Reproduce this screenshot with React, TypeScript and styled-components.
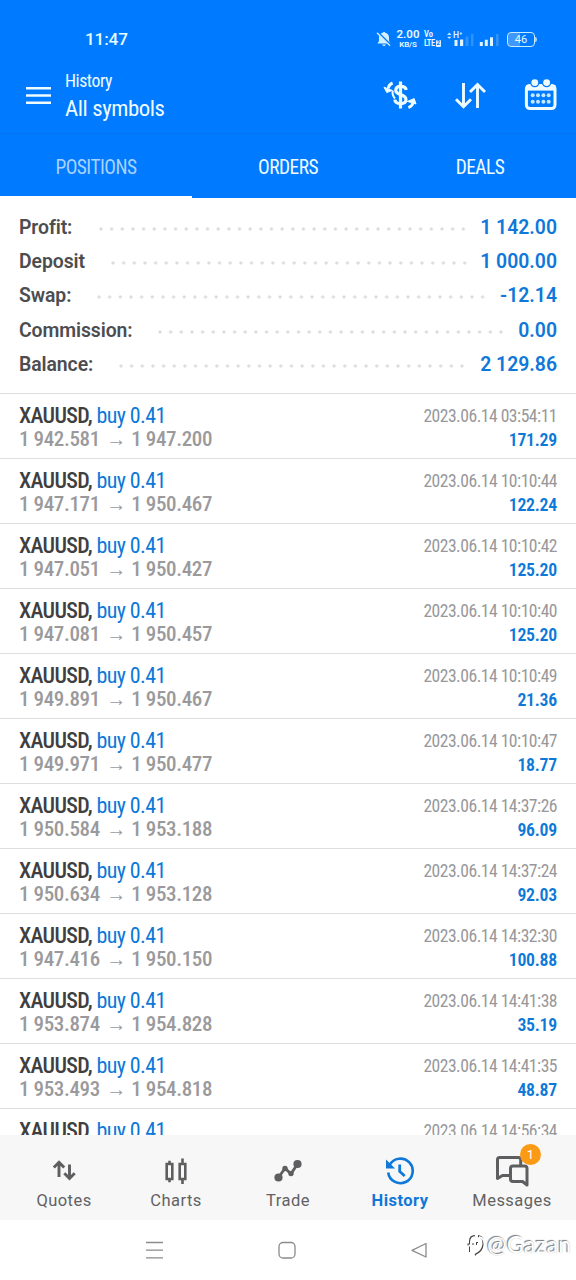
import React from 'react';
import styled, { createGlobalStyle, css } from 'styled-components';

const GlobalStyle = createGlobalStyle`
    body {
        margin: 0;
        background: #ffffff;
        font-family: Roboto, "Liberation Sans", sans-serif;
    }
`;

const condensed = css`
    font-stretch: 75%;
    white-space: nowrap;
`;

const Screen = styled.div`
    width: 576px;
    height: 1280px;
    display: flex;
    flex-direction: column;
    overflow: hidden;
    background: #ffffff;
`;

const StatusBar = styled.div`
    flex: none;
    box-sizing: border-box;
    height: 60px;
    padding: 18px 39px 0 85px;
    display: flex;
    justify-content: space-between;
    align-items: center;
    background: #007aff;
    color: #e6fbff;
`;

const Clock = styled.div`
    font-size: 17.2px;
    font-weight: 500;
    letter-spacing: -0.15px;
`;

const StatusIcons = styled.div`
    display: flex;
    align-items: center;
`;

const NetSpeed = styled.div`
    width: 24px;
    margin-left: 4px;
    text-align: center;
    font-size: 8px;
    line-height: 9px;
    font-weight: 600;
    letter-spacing: -0.1px;
    white-space: nowrap;

    b {
        display: block;
        font-size: 11.5px;
        line-height: 11px;
        font-weight: 600;
        letter-spacing: 0;
    }
`;

const Volte = styled.div`
    width: 17px;
    margin: 0 5px 0 4px;
    font-size: 8.5px;
    line-height: 9px;
    font-weight: 600;
    font-stretch: 75%;
    letter-spacing: -0.4px;

    span {
        display: block;
        letter-spacing: 0;
    }
`;

const VolteRow = styled.div`
    display: flex;
    align-items: center;
`;

const SimMark = styled.i`
    width: 6px;
    height: 7px;
    margin-left: 1px;
    border-radius: 1px;
    background: #dff4ff;
    color: #007aff;
    font-size: 7px;
    line-height: 7px;
    letter-spacing: 0;
    font-style: normal;
    text-align: center;
`;

const Battery = styled.div`
    box-sizing: border-box;
    width: 28px;
    height: 15px;
    margin-left: 8px;
    border: 1px solid #c8ecff;
    border-radius: 4px;
    display: flex;
    align-items: center;
    justify-content: center;
    font-size: 11px;
    background: linear-gradient(90deg, #3f98fb 46%, transparent 46%);
`;

const BatteryTip = styled.div`
    width: 2px;
    height: 5px;
    border-radius: 0 2px 2px 0;
    background: #9fd4ff;
`;

const Header = styled.header`
    flex: none;
    box-sizing: border-box;
    height: 74px;
    padding: 0 18px 0 26px;
    display: flex;
    background: #007aff;
    border-bottom: 1px solid #0674f0;
`;

const Titles = styled.div`
    ${condensed}
    flex: 1;
    margin-left: 14px;
    padding-top: 10px;
    color: #effcff;
`;

const Caption = styled.div`
    font-size: 17.8px;
    line-height: 21px;
    letter-spacing: -0.45px;
`;

const Title = styled.div`
    font-size: 22.8px;
    line-height: 26px;
    letter-spacing: -0.42px;
    margin-top: 5px;
`;

const MenuIcon = styled.svg`
    margin-top: 27px;
`;

const Actions = styled.div`
    display: flex;
    gap: 36px;
    padding-top: 17px;
`;

const Tabs = styled.nav`
    flex: none;
    height: 64px;
    display: flex;
    background: #007aff;
`;

const Tab = styled.div<{ $active?: boolean }>`
    ${condensed}
    box-sizing: border-box;
    flex: 1;
    text-align: center;
    font-size: 19.4px;
    letter-spacing: -0.5px;
    line-height: 67px;
    height: 64px;
    color: ${p => (p.$active ? '#a9d2fd' : '#effcff')};
    border-bottom: ${p => (p.$active ? '2px solid #ffffff' : 'none')};
`;

const Summary = styled.section`
    flex: none;
    box-sizing: border-box;
    height: 195px;
    padding: 12px 19px 0;
`;

const SummaryRow = styled.div`
    display: flex;
    height: 34.2px;
    line-height: 36px;
    font-size: 19.4px;
    font-weight: 600;
    letter-spacing: -0.08px;
    color: #4d4d50;
`;

const Dots = styled.div<{ $left: number; $right: number }>`
    flex: 1;
    height: 4px;
    margin: 17px ${p => p.$right}px 0 ${p => p.$left}px;
    background: radial-gradient(circle at 2px 2px, #dcdcdf 1.2px, transparent 2px) 0 0 / 10.67px 4px repeat-x;
`;

const Amount = styled.span`
    color: #1078d8;
    letter-spacing: 0;
`;

const List = styled.main`
    flex: 1;
    min-height: 0;
    overflow: hidden;
`;

const Deal = styled.div`
    ${condensed}
    box-sizing: border-box;
    height: 65.04px;
    padding: 10px 19px 0;
    display: flex;
    justify-content: space-between;
    border-top: 1px solid #dededf;
`;

const Name = styled.div`
    font-size: 22px;
    line-height: 24px;
    font-weight: 500;
    letter-spacing: -0.68px;
    color: #3f3f42;

    span {
        font-weight: 400;
        letter-spacing: -0.6px;
        color: #0c78d8;
    }
`;

const Prices = styled.div`
    font-size: 21px;
    line-height: 23px;
    font-weight: 500;
    letter-spacing: -0.38px;
    color: #9a9a9d;
`;

const Arrow = styled.span`
    margin: 0 1px 0 2px;
    font-size: 20px;
`;

const Right = styled.div`
    text-align: right;
`;

const Time = styled.div`
    font-size: 17.6px;
    line-height: 24px;
    letter-spacing: -0.5px;
    color: #98989b;
`;

const Profit = styled.div`
    font-size: 17.8px;
    line-height: 23px;
    font-weight: 600;
    letter-spacing: -0.25px;
    color: #0c78d8;
`;

const BottomNav = styled.nav`
    flex: none;
    box-sizing: border-box;
    height: 85px;
    padding: 0 8px;
    display: flex;
    background: #f7f7f7;
`;

const NavItem = styled.div<{ $active?: boolean }>`
    flex: 1;
    display: flex;
    flex-direction: column;
    align-items: center;
    padding-top: 16px;
    color: ${p => (p.$active ? '#1078d8' : '#626264')};
    font-size: 16.5px;
    line-height: 20px;
    font-weight: ${p => (p.$active ? 700 : 400)};
    letter-spacing: 0.45px;
`;

const IconBox = styled.div`
    position: relative;
    height: 40px;
    display: flex;
`;

const Badge = styled.div`
    position: absolute;
    left: 25px;
    top: -7px;
    width: 21px;
    height: 21px;
    border-radius: 50%;
    background: #fb9a14;
    color: #ffffff;
    font-size: 13px;
    line-height: 21px;
    font-weight: 400;
    letter-spacing: 0;
    text-align: center;
`;

const SystemNav = styled.div`
    flex: none;
    box-sizing: border-box;
    height: 60px;
    padding: 20px 0 0 144px;
    display: flex;
    gap: 113px;
`;

const Watermark = styled.div`
    display: flex;
    margin: -8px 0 0 -76px;
    color: #ffffff;
    font-family: Lato, sans-serif;
    font-size: 23px;
    line-height: 25px;
    letter-spacing: 0.4px;
    text-shadow: -1px -1px 1px #777777, 0 0 1px #bbbbbb;

    svg {
        filter: drop-shadow(-1px -1px 0.5px #444444);
    }
`;

const summary = [
    { label: 'Profit:', value: '1 142.00', left: 26.5, right: 11.5 },
    { label: 'Deposit', value: '1 000.00', left: 26.5, right: 10 },
    { label: 'Swap:', value: '-12.14', left: 26, right: 15 },
    { label: 'Commission:', value: '0.00', left: 25.5, right: 14 },
    { label: 'Balance:', value: '2 129.86', left: 26, right: 12 },
];

const deals = [
    ['1 942.581', '1 947.200', '2023.06.14 03:54:11', '171.29'],
    ['1 947.171', '1 950.467', '2023.06.14 10:10:44', '122.24'],
    ['1 947.051', '1 950.427', '2023.06.14 10:10:42', '125.20'],
    ['1 947.081', '1 950.457', '2023.06.14 10:10:40', '125.20'],
    ['1 949.891', '1 950.467', '2023.06.14 10:10:49', '21.36'],
    ['1 949.971', '1 950.477', '2023.06.14 10:10:47', '18.77'],
    ['1 950.584', '1 953.188', '2023.06.14 14:37:26', '96.09'],
    ['1 950.634', '1 953.128', '2023.06.14 14:37:24', '92.03'],
    ['1 947.416', '1 950.150', '2023.06.14 14:32:30', '100.88'],
    ['1 953.874', '1 954.828', '2023.06.14 14:41:38', '35.19'],
    ['1 953.493', '1 954.818', '2023.06.14 14:41:35', '48.87'],
    ['', '', '2023.06.14 14:56:34', ''],
];

const BellOff = () => (
    <svg width="16" height="18" viewBox="0 0 16 18">
        <path d="M1.5 13.4 L3 11 V7 Q3.4 3.6 6.8 2.8 Q8 .6 9.2 2.8 Q12.6 3.6 13 7 V11 L14.6 13.4 Z" fill="#d5f0ff" />
        <path d="M6.2 14.4h3.6q-.4 1.7-1.8 1.7T6.2 14.4z" fill="#d5f0ff" />
        <path d="M1.8 2.2 L14.8 15.2" stroke="#007aff" strokeWidth="2.2" />
        <path d="M1 2.8 L14 15.8" stroke="#d5f0ff" strokeWidth="1.3" />
    </svg>
);

const Signals = () => (
    <svg width="53" height="18" viewBox="0 0 53 18">
        <path d="M1 5 L3.3 2.6 L5.6 5z M1 6.8 L3.3 9 L5.600 6.800z" fill="#bfe6ff" />
        <text x="7" y="8.2" fontSize="8.5" fontWeight="600" fill="#dff4ff">H⁺</text>
        <path d="M8.500 10h3v6h-3z M14 9.500h3.200v6.500H14z" fill="#dff4ff" />
        <path d="M19.500 6.500h3V16h-3z M25 4h2.400v12H25z" fill="#2f93fb" />
        <path d="M33.800 12h3v4h-3z M38.800 9.800h3V16h-3z M44 7.200h3V16h-3z" fill="#dff4ff" />
        <path d="M50 4h2.600v12H50z" fill="#2f93fb" />
    </svg>
);

const CurrencyIcon = () => (
    <svg width="34" height="34" viewBox="0 0 34 34" fill="none" stroke="#effcff">
        <path d="M23.2 13 Q22.6 9.4 17.6 9.4 Q12.8 9.4 12.8 13.3 Q12.8 16.2 17.6 17.6 Q23 19.2 23 22.8 Q23 26.6 17.6 26.6 Q12.2 26.6 11.8 22.6" strokeWidth="3.2" />
        <path d="M17.5 4.500V31.500" strokeWidth="3.2" />
        <path d="M9.600 6 Q5.600 7.600 5.400 11.500" strokeWidth="3" />
        <path d="M1 10.200 L9.200 13.400 L3.800 15.600z" fill="#effcff" strokeWidth="1" />
        <path d="M9.8 13.500 Q8.8 18 12 21.5" strokeWidth="2" />
        <path d="M25.400 30.600 Q29.600 29 29.800 25.500" strokeWidth="3" />
        <path d="M24.400 24.400 L31.200 21.600 L33 27z" fill="#effcff" strokeWidth="1" />
    </svg>
);

const SortIcon = () => (
    <svg width="34" height="34" viewBox="0 0 34 34" fill="none" stroke="#effcff" strokeWidth="2.9">
        <path d="M10.5 6V30 M3 22.3 L10.5 29.8 L18 22.3" />
        <path d="M24.5 31V7.5 M17 15 L24.5 7.5 L32 15" />
    </svg>
);

const CalendarIcon = () => (
    <svg width="35" height="34" viewBox="0 0 35 34">
        <rect x="3.4" y="8.4" width="28.6" height="23.2" rx="3.5" fill="none" stroke="#effcff" strokeWidth="3" />
        <path d="M3 8h29.400v5.600H3z" fill="#effcff" />
        <circle cx="11.800" cy="5.600" r="4.100" fill="#effcff" stroke="#007aff" strokeWidth="1.300" />
        <circle cx="23.600" cy="5.600" r="4.100" fill="#effcff" stroke="#007aff" strokeWidth="1.300" />
        {[18.2, 24.7].map(y =>
            [9.7, 15, 20.4, 25.7].map(x => <circle key={`${x}-${y}`} cx={x} cy={y} r="2" fill="#c4e9ff" />)
        )}
    </svg>
);

const QuotesIcon = () => (
    <svg width="24" height="30" viewBox="0 0 24 30" fill="none" stroke="#5e5e60" strokeWidth="2.9">
        <path d="M7 26V12 M1.8 16.5 L7 11.3 L12.2 16.5" />
        <path d="M17.5 13.5V28 M12.3 22.3 L17.5 27.5 L22.7 22.3" />
    </svg>
);

const ChartsIcon = () => (
    <svg width="24" height="34" viewBox="0 0 24 34" fill="none" stroke="#5e5e60" strokeWidth="2.6">
        <path d="M2.7 13h5.6v15H2.7z M5.5 9.8v3 M5.5 28v3.2" />
        <path d="M15.7 13h5.6v15h-5.6z M18.5 7.5v5 M18.5 28v5" />
    </svg>
);

const TradeIcon = () => (
    <svg width="30" height="34" viewBox="0 0 30 34">
        <path d="M5.5 26.5 L12 17.3 L18 22.8 L24.5 13" fill="none" stroke="#5e5e60" strokeWidth="2.8" />
        <circle cx="5.5" cy="26.5" r="4.1" fill="#5e5e60" />
        <circle cx="12" cy="17.5" r="2.7" fill="#5e5e60" />
        <circle cx="18" cy="22.6" r="2.7" fill="#5e5e60" />
        <circle cx="24.5" cy="13" r="4.1" fill="#5e5e60" />
    </svg>
);

const HistoryIcon = () => (
    <svg width="30" height="36" viewBox="0 0 30 36" fill="none" stroke="#1078d8" strokeWidth="2.6">
        <path d="M4.6 14 A12.3 12.3 0 1 1 3.2 21.5" />
        <path d="M1.6 10V17H8.600z" fill="#1078d8" strokeWidth="1.2" />
        <path d="M14.7 13.5V20.5L19.700 25" strokeWidth="2.8" />
    </svg>
);

const MessagesIcon = () => (
    <svg width="34" height="36" viewBox="0 0 34 36" fill="none" stroke="#5e5e60" strokeWidth="3" strokeLinejoin="round">
        <path d="M14 24.5H7.5 L2.5 27.5V8.8Q2.5 6.6 4.7 6.6H23.5Q25.7 6.6 25.7 8.8V14" />
        <path d="M18 15H29.5Q32 15 32 17.5V34L27.5 30.5H18Q15.5 30.5 15.5 28V17.5Q15.5 15 18 15z" />
    </svg>
);

const navItems = [
    { label: 'Quotes', icon: <QuotesIcon /> },
    { label: 'Charts', icon: <ChartsIcon /> },
    { label: 'Trade', icon: <TradeIcon /> },
    { label: 'History', icon: <HistoryIcon />, active: true },
    { label: 'Messages', icon: <MessagesIcon />, badge: 1 },
];

const App = () => {
    return (
        <>
            <GlobalStyle />
            <Screen>
                <StatusBar>
                    <Clock>11:47</Clock>
                    <StatusIcons>
                        <BellOff />
                        <NetSpeed><b>2.00</b>KB/S</NetSpeed>
                        <Volte>
                            <span>Vo</span>
                            <VolteRow>LTE<SimMark>2</SimMark></VolteRow>
                        </Volte>
                        <Signals />
                        <Battery>46</Battery>
                        <BatteryTip />
                    </StatusIcons>
                </StatusBar>
                <Header>
                    <MenuIcon width="25" height="18" viewBox="0 0 25 18">
                        <path d="M0 1.3h25 M0 8.5h25 M0 15.7h25" stroke="#effcff" strokeWidth="2.6" />
                    </MenuIcon>
                    <Titles>
                        <Caption>History</Caption>
                        <Title>All symbols</Title>
                    </Titles>
                    <Actions>
                        <CurrencyIcon />
                        <SortIcon />
                        <CalendarIcon />
                    </Actions>
                </Header>
                <Tabs>
                    <Tab $active>POSITIONS</Tab>
                    <Tab>ORDERS</Tab>
                    <Tab>DEALS</Tab>
                </Tabs>
                <Summary>
                    {summary.map(row => (
                        <SummaryRow key={row.label}>
                            <span>{row.label}</span>
                            <Dots $left={row.left} $right={row.right} />
                            <Amount>{row.value}</Amount>
                        </SummaryRow>
                    ))}
                </Summary>
                <List>
                    {deals.map(([open, close, time, profit]) => (
                        <Deal key={time}>
                            <div>
                                <Name>XAUUSD, <span>buy 0.41</span></Name>
                                {open && <Prices>{open} <Arrow>→</Arrow> {close}</Prices>}
                            </div>
                            <Right>
                                <Time>{time}</Time>
                                <Profit>{profit}</Profit>
                            </Right>
                        </Deal>
                    ))}
                </List>
                <BottomNav>
                    {navItems.map(item => (
                        <NavItem key={item.label} $active={item.active}>
                            <IconBox>
                                {item.icon}
                                {item.badge && <Badge>{item.badge}</Badge>}
                            </IconBox>
                            {item.label}
                        </NavItem>
                    ))}
                </BottomNav>
                <SystemNav>
                    <svg width="20" height="20" viewBox="0 0 20 20">
                        <path d="M2 2.5h17 M2 10.2h17 M2 17.8h17" stroke="#8b8b8d" strokeWidth="1.3" />
                    </svg>
                    <svg width="20" height="20" viewBox="0 0 20 20">
                        <rect x="2" y="2.5" width="16" height="15.5" rx="4" fill="none" stroke="#8b8b8d" strokeWidth="1.3" />
                    </svg>
                    <svg width="20" height="20" viewBox="0 0 20 20">
                        <path d="M16 3.5V17L2 10.3z" fill="none" stroke="#8b8b8d" strokeWidth="1.3" strokeLinejoin="round" />
                    </svg>
                    <Watermark>
                        <svg width="20" height="28" viewBox="0 0 20 28" fill="none" stroke="#ffffff" strokeWidth="2">
                            <path d="M4 21V10Q4 5 9 5 M1.5 13.5H8 M12 5Q18 6 17.5 13Q17 20 9 24 M11 11v3" />
                        </svg>
                        @Gazan
                    </Watermark>
                </SystemNav>
            </Screen>
        </>
    );
};

export default App;
